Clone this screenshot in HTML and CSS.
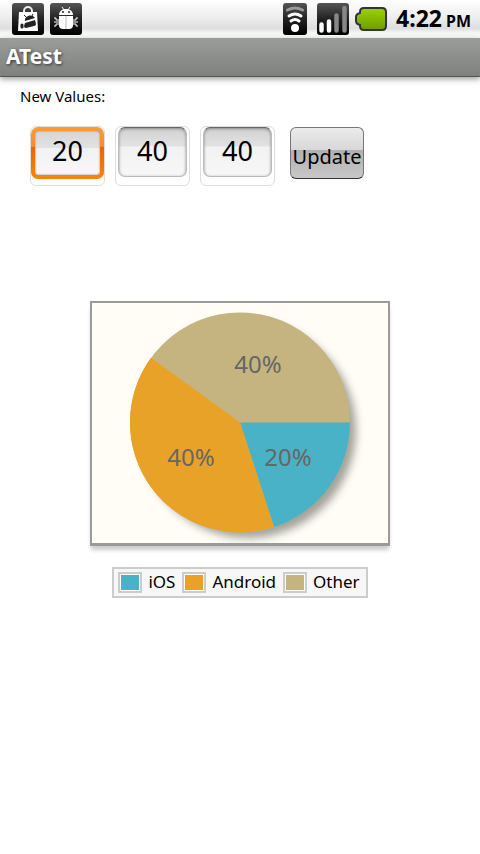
FILE: index.html
```html
<!DOCTYPE html>
<html lang="en">
<head>
<meta charset="utf-8">
<meta name="viewport" content="width=device-width, initial-scale=1">
<title>ATest</title>
<link rel="stylesheet" href="styles.css">
</head>
<body>
<header>
  <div class="status-bar">
    <svg class="notice" width="32" height="32" viewBox="0 0 32 32" aria-hidden="true">
      <defs>
        <linearGradient id="tile" x1="0" y1="0" x2="0" y2="1"><stop offset="0" stop-color="#555"/><stop offset=".5" stop-color="#222"/><stop offset="1" stop-color="#000"/></linearGradient>
        <linearGradient id="charge" x1="0" y1="0" x2="0" y2="1"><stop offset="0" stop-color="#9ad400"/><stop offset="1" stop-color="#6f9c00"/></linearGradient>
      </defs>
      <rect width="32" height="32" rx="3" fill="url(#tile)"/>
      <path d="M12 10V8a4 4 0 0 1 8 0v2" fill="none" stroke="#eee" stroke-width="2"/>
      <path d="M7 9h18l1 19H6z" fill="#fff"/>
      <path d="M13 18c-1-5 7-8 10-3z" fill="#222"/>
      <path d="M14 14l-2-2M20 13l1-2" stroke="#222"/>
      <path d="M13 20l10-3 1 4q0 2-2 2l-8 2q-2 0-2-2z" fill="#222"/>
      <path d="M10 22v2" stroke="#222" stroke-width="3" stroke-linecap="round"/>
    </svg>
    <svg class="notice" width="32" height="32" viewBox="0 0 32 32" aria-hidden="true">
      <rect width="32" height="32" rx="3" fill="url(#tile)"/>
      <path d="M9 12c0-8 14-8 14 0z" fill="#fff"/>
      <path d="M12 4l2 3M20 4l-2 3" stroke="#fff"/>
      <circle cx="13" cy="9" r="1" fill="#222"/><circle cx="19" cy="9" r="1" fill="#222"/>
      <path d="M9 13h14v9q0 4-4 4h-6q-4 0-4-4z" fill="#fff"/>
      <path d="M16 13v13" stroke="#bbb"/>
      <path d="M9 17H6v-2H4M9 19H4M9 21H6v2H4M23 17h3v-2h2M23 19h5M23 21h3v2h2" fill="none" stroke="#fff"/>
    </svg>
    <svg class="wifi" width="24" height="32" viewBox="0 0 24 32" aria-hidden="true">
      <rect width="24" height="32" rx="3" fill="url(#tile)"/>
      <g fill="none" stroke-width="3" stroke-linecap="round">
        <path d="M4.500 7q7.500-4 15 0" stroke="#999"/>
        <path d="M6 13q6-4 12 0M8 18q4-3 8 0" stroke="#fff"/>
      </g>
      <circle cx="12" cy="25" r="4" fill="#fff"/>
    </svg>
    <svg class="signal" width="32" height="32" viewBox="0 0 32 32" aria-hidden="true">
      <rect width="32" height="32" rx="3" fill="url(#tile)"/>
      <g stroke-width="4.500" stroke-linecap="round">
        <path d="M4.500 21.500v6M12 18.500v9" stroke="#fff"/>
        <path d="M19.500 12.500v15M27.500 5v22.500" stroke="#888"/>
      </g>
    </svg>
    <svg class="battery" width="32" height="24" viewBox="0 0 32 24" aria-hidden="true">
      <path d="M9 1h18q4 0 4 4v14q0 4-4 4H9q-4 0-4-4v-1q-4-1-4-4v-4q0-3 4-4V5q0-4 4-4z" fill="url(#charge)" stroke="#333" stroke-width="2"/>
    </svg>
    <time class="clock">4:22 <small>PM</small></time>
  </div>
  <h1>ATest</h1>
</header>
<main>
  <form>
    <p class="caption">New Values:</p>
    <div class="controls">
      <label class="field"><input class="active" type="text" inputmode="numeric" value="20" aria-label="iOS"></label>
      <label class="field"><input type="text" inputmode="numeric" value="40" aria-label="Android"></label>
      <label class="field"><input type="text" inputmode="numeric" value="40" aria-label="Other"></label>
      <button type="button">Update</button>
    </div>
  </form>
  <figure>
    <div class="chart">
      <svg viewBox="0 0 296 240" role="img" aria-label="iOS 20%, Android 40%, Other 40%">
        <defs>
          <filter id="soft" x="-20%" y="-20%" width="140%" height="140%"><feGaussianBlur stdDeviation="4"/></filter>
        </defs>
        <circle cx="156" cy="127" r="108" fill="#66665c" opacity=".6" filter="url(#soft)"/>
        <circle cx="148" cy="119.500" r="110" fill="#c5b47f"/>
        <path d="M148 119.500H258A110 110 0 0 1 182 224.100z" fill="#4ab2c7"/>
        <path d="M148 119.500L182 224.100A110 110 0 0 1 59 54.800z" fill="#e9a228"/>
        <g class="share"><text x="166" y="70">40%</text><text x="99" y="163">40%</text><text x="196" y="163">20%</text></g>
      </svg>
    </div>
    <figcaption>
      <ul class="legend">
        <li><span class="swatch ios"></span>iOS</li>
        <li><span class="swatch android"></span>Android</li>
        <li><span class="swatch other"></span>Other</li>
      </ul>
    </figcaption>
  </figure>
</main>
</body>
</html>
```
FILE: styles.css
```css
* { box-sizing: border-box; }
body {
  margin: 0;
  background: #fff;
  color: #000;
  font-family: "Noto Sans", "Open Sans", sans-serif;
}
.status-bar {
  display: flex;
  align-items: center;
  height: 38px;
  padding: 0 9px 0 12px;
  background: linear-gradient(#fff, #ececec 50%, #dedede 75%, #f4f4f4 85%, #fff);
}
.notice { margin-right: 6px; }
.wifi { margin-left: auto; margin-right: 10px; }
.signal { margin-right: 6px; }
.battery { margin-right: 9px; }
.clock { font-size: 23px; font-weight: 700; line-height: 40px; white-space: nowrap; }
.clock small { font-size: 16px; margin-left: -2px; }
h1 {
  margin: 0;
  height: 39px;
  padding-left: 6px;
  border-bottom: 1px solid #555;
  background: linear-gradient(#9b9d9b, #7f817f);
  box-shadow: 0 2px 6px #999;
  color: #fff;
  font-size: 21px;
  line-height: 36px;
  text-shadow: 1px 1px 3px #333;
}
.caption {
  margin: 0;
  padding: 10px 20px 0;
  font-size: 15px;
  line-height: 18px;
}
.controls {
  display: flex;
  align-items: flex-start;
  gap: 10px;
  padding: 21px 30px 0;
}
.field {
  width: 75px;
  height: 60px;
  padding: 0 2px;
  border: 1px solid #ddd;
  border-radius: 6px;
}
input {
  display: block;
  width: 69px;
  height: 50px;
  padding: 0 0 3px;
  border: 1px solid #bbb;
  border-top-color: #666;
  border-radius: 7px;
  outline: 0;
  background: linear-gradient(#d2d2d2, #e2e2e2 38%, #f2f2f2 39%, #f7f7f7);
  box-shadow: inset 0 1px 3px #888;
  color: #000;
  font: 27px "Noto Sans", "Open Sans", sans-serif;
  text-align: center;
}
.field:has(.active) { padding: 0; }
.field .active {
  width: 100%;
  height: 52px;
  padding-bottom: 5px;
  border: 4px solid transparent;
  background:
    linear-gradient(#d6d6d6, #e2e2e2 38%, #f2f2f2 39%, #f7f7f7) padding-box,
    linear-gradient(#ff9c3a, #f68a30 38%, #ea6500 39%, #ff8400) border-box;
  box-shadow: inset 0 0 2px #777;
}
button {
  width: 74px;
  height: 52px;
  margin: 1px 0 0 5px;
  padding: 7px 0 0;
  border: 1px solid #777;
  border-bottom-color: #333;
  border-radius: 6px;
  background: linear-gradient(#ebebeb, #d8d8d8 43%, #b0b0b0 44%, #c8c8c8);
  color: #000;
  font: 20px "Noto Sans", "Open Sans", sans-serif;
}
figure {
  display: flex;
  flex-direction: column;
  align-items: center;
  gap: 21px;
  margin: 115px 20px 20px;
}
.chart {
  width: 100%;
  max-width: 300px;
  border: 2px solid #999b99;
  border-bottom-width: 3px;
  background: #fffdf6;
  box-shadow: 0 5px 4px -1px #ccc;
}
.chart svg { display: block; width: 100%; }
.share { fill: #666; font-size: 24px; text-anchor: middle; }
.legend {
  display: flex;
  gap: 7px;
  margin: 0;
  padding: 2px 6px 3px 4px;
  border: 2px solid #ccc;
  background: #f7f7f7;
  list-style: none;
  font-size: 17px;
  line-height: 22px;
}
.legend li { display: flex; align-items: center; gap: 6px; }
.swatch {
  width: 24px;
  height: 21px;
  border: 2px solid #ccc;
  box-shadow: inset 0 0 0 1px #fffdf6;
}
.ios { background: #4ab2c7; }
.android { background: #e9a228; }
.other { background: #c5b47f; }
```
